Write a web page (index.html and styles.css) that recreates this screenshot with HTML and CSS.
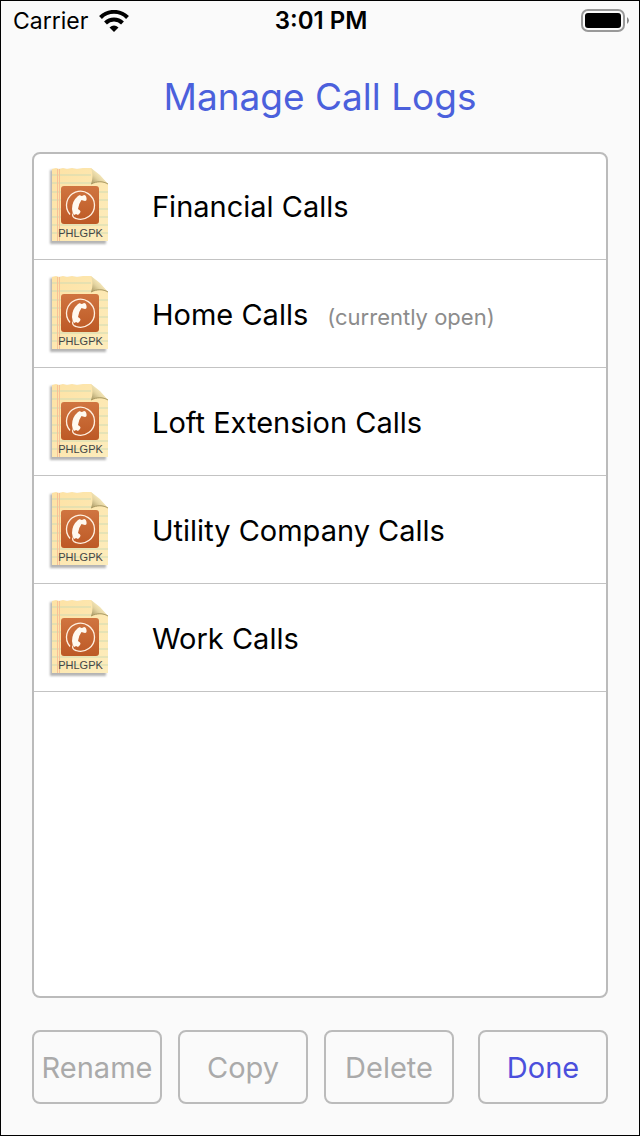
FILE: index.html
```html
<!DOCTYPE html>
<html lang="en">
<head>
  <meta charset="UTF-8">
  <meta name="viewport" content="width=device-width, initial-scale=1.0">
  <title>Manage Call Logs</title>
  <link rel="stylesheet" href="styles.css">
</head>
<body>
  <!-- call log document icon, shared by every row -->
  <svg class="sprite" aria-hidden="true">
    <defs>
      <linearGradient id="paper" x1="0" y1="0" x2="1" y2="1">
        <stop offset="0" stop-color="#fde2a4"/>
        <stop offset="1" stop-color="#fdedbd"/>
      </linearGradient>
      <linearGradient id="badge" x1="0" y1="0" x2="0" y2="1">
        <stop offset="0" stop-color="#d07540"/>
        <stop offset="1" stop-color="#bd5925"/>
      </linearGradient>
      <linearGradient id="fold" x1="0" y1="1" x2="1" y2="0">
        <stop offset="0" stop-color="#a3935f"/>
        <stop offset="0.35" stop-color="#e3d3a0"/>
        <stop offset="0.6" stop-color="#f8eabd"/>
        <stop offset="1" stop-color="#c9b883"/>
      </linearGradient>
      <filter id="shadow" x="-10%" y="-10%" width="120%" height="120%">
        <feGaussianBlur stdDeviation="0.8"/>
      </filter>
      <symbol id="log-icon" viewBox="0 0 62 82">
        <path d="M2 4H42L58 19V78H2Z" fill="#777" opacity="0.55" filter="url(#shadow)"/>
        <path d="M4 3L8 2L11 3L15 2L19 3L24 2L29 3L35 2L43 2L60 18V75H4Z" fill="url(#paper)"/>
        <path d="M4 9H43M4 17H43M4 26H60M4 34H60M4 43H60M4 51H60M4 59H60M4 67H60" stroke="#cfdbb4" stroke-width="1"/>
        <path d="M9.500 3V75M11.500 3V75" stroke="#f8c096" stroke-width="1"/>
        <path d="M43 2C45 7 45 13 43 18C49 15 55 15 60 18L52 9Z" fill="url(#fold)"/>
        <path d="M43 18C49 15 55 15 60 18" fill="none" stroke="#a89761" stroke-width="1"/>
        <rect x="13" y="20" width="38" height="38" rx="3" fill="url(#badge)"/>
        <path d="M22 48.500A14 14 0 1 1 28 52.500C25 52 24 49.500 25 47.500" fill="none" stroke="#fff0e0" stroke-width="1.300"/>
        <path d="M30 30L32 29L33 30Q35 30 36 29Q38 29 38.500 32Q39 35 37 35L35 34.500L33.500 34Q30.500 38 30 43L32 44.500Q33 45 32 47L30 49L28 48L26.500 49Q24 47 24 43Q24 35 30 30Z" fill="#fff9ef"/>
        <text x="32.500" y="71" class="icon-text">PHLGPK</text>
      </symbol>
    </defs>
  </svg>

  <div class="status-bar">
    <div class="carrier">
      <span>Carrier</span>
      <svg class="wifi" viewBox="0 0 30 22" aria-hidden="true">
        <path d="M1.500 7.500A19 19 0 0 1 28.500 7.500" fill="none" stroke="#000" stroke-width="4"/>
        <path d="M6.500 13A12 12 0 0 1 23.500 13" fill="none" stroke="#000" stroke-width="4"/>
        <path d="M10.500 17.500Q15 13.500 19.500 17.500L15 22Z"/>
      </svg>
    </div>
    <time class="time">3:01 PM</time>
    <svg class="battery" viewBox="0 0 48 24" aria-hidden="true">
      <rect x="1" y="1" width="42" height="21" rx="6" fill="none" stroke="#999" stroke-width="2"/>
      <rect x="4" y="4" width="36" height="15" rx="3"/>
      <path d="M46 8Q50 11.500 46 15Z" fill="#888"/>
    </svg>
  </div>

  <h1>Manage Call Logs</h1>

  <main class="log-list">
    <ul>
      <li><svg class="log-icon" aria-hidden="true"><use href="#log-icon"/></svg><span>Financial Calls</span></li>
      <li><svg class="log-icon" aria-hidden="true"><use href="#log-icon"/></svg><span>Home Calls</span><span class="note">(currently open)</span></li>
      <li><svg class="log-icon" aria-hidden="true"><use href="#log-icon"/></svg><span>Loft Extension Calls</span></li>
      <li><svg class="log-icon" aria-hidden="true"><use href="#log-icon"/></svg><span>Utility Company Calls</span></li>
      <li><svg class="log-icon" aria-hidden="true"><use href="#log-icon"/></svg><span>Work Calls</span></li>
    </ul>
  </main>

  <div class="actions">
    <button type="button" disabled>Rename</button>
    <button type="button" disabled>Copy</button>
    <button type="button" disabled>Delete</button>
    <button type="button" class="done">Done</button>
  </div>
</body>
</html>
```
FILE: styles.css
```css
* {
  box-sizing: border-box;
}

body {
  display: flex;
  flex-direction: column;
  min-height: 100vh;
  margin: 0;
  border: 1px solid #000;
  background-color: #fafafa;
  color: #000;
  font-family: Inter, "Liberation Sans", sans-serif;
}

.sprite {
  position: absolute;
  width: 0;
  height: 0;
}

.status-bar {
  display: grid;
  grid-template-columns: 1fr auto 1fr;
  align-items: center;
  height: 39px;
  padding: 0 10px 0 12px;
  font-size: 23px;
}

.carrier {
  display: flex;
  align-items: center;
  gap: 11px;
}

.wifi {
  width: 30px;
  height: 22px;
}

.time {
  font-size: 24px;
  font-weight: 600;
}

.battery {
  justify-self: end;
  width: 48px;
  height: 24px;
}

h1 {
  margin: 32px 0 31px;
  color: #4b60dc;
  font-size: 37px;
  font-weight: 400;
  line-height: 49px;
  text-align: center;
}

.log-list {
  flex: 1;
  margin: 0 31px;
  border: 2px solid #bbb;
  border-radius: 8px;
  background-color: #fff;
}

.log-list ul {
  margin: -2px 0 0;
  padding: 0;
  list-style: none;
}

.log-list li {
  display: flex;
  align-items: center;
  height: 108px;
  padding: 2px 0 0 14px;
  border-bottom: 1px solid #c3c3c3;
  font-size: 29px;
}

.log-icon {
  width: 62px;
  height: 82px;
  margin-right: 42px;
}

.icon-text {
  fill: #444;
  font-family: "Liberation Sans", sans-serif;
  font-size: 11px;
  text-anchor: middle;
}

.log-list .note {
  margin: 5px 0 0 19px;
  color: #8c8c8c;
  font-size: 22px;
}

.actions {
  display: flex;
  gap: 16px;
  margin: 32px 31px 31px;
}

button {
  flex: 1 1 0;
  height: 74px;
  padding: 0;
  border: 2px solid #bbb;
  border-radius: 8px;
  background-color: transparent;
  color: #4b4fdc;
  font-family: inherit;
  font-size: 29px;
}

button:disabled {
  color: #aaa;
}

.done {
  margin-left: 8px;
}
```
